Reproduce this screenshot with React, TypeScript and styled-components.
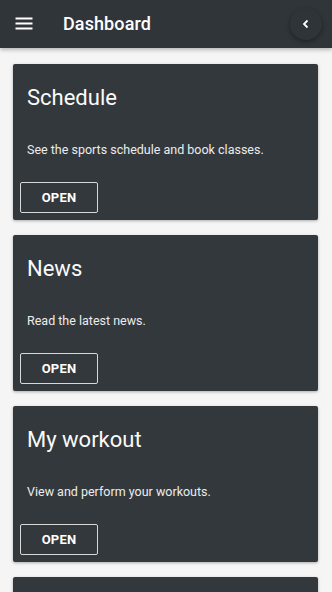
import { FC } from "react";
import styled, { createGlobalStyle } from "styled-components";

const GlobalStyle = createGlobalStyle`
  html, body {
    margin: 0;
    padding: 0;
    background: #f5f5f5;
    font-family: Roboto, "Liberation Sans", sans-serif;
  }
  * {
    box-sizing: border-box;
  }
`;

const Page = styled.div`
  width: 332px;
  height: 592px;
  overflow: hidden;
  background: #f5f5f5;
`;

const TopBar = styled.header`
  height: 48px;
  display: flex;
  align-items: center;
  padding: 0 10px 0 12px;
  background: #303539;
  color: #ffffff;
  box-shadow: 0 2px 4px rgba(0, 0, 0, 0.25);
  position: relative;
  z-index: 1;
`;

const MenuButton = styled.button`
  width: 24px;
  height: 24px;
  padding: 0;
  border: none;
  background: none;
  color: #ffffff;
  display: flex;
  align-items: center;
  justify-content: center;
`;

const Title = styled.h1`
  margin: 0 0 0 27px;
  flex: 1;
  font-size: 18px;
  font-weight: 500;
  line-height: 24px;
  letter-spacing: 0.1px;
`;

const BackButton = styled.button`
  width: 32px;
  height: 32px;
  border-radius: 50%;
  border: none;
  padding: 0;
  background: #2f3438;
  color: #ffffff;
  box-shadow: 0 2px 5px rgba(0, 0, 0, 0.35);
  display: flex;
  align-items: center;
  justify-content: center;
`;

const CardList = styled.main`
  display: flex;
  flex-direction: column;
  gap: 15px;
  padding: 16px 14px 16px 13px;
`;

const Card = styled.section<{ $peek?: boolean }>`
  background: #33383c;
  border-radius: 2px;
  box-shadow: 0 1px 3px rgba(0, 0, 0, 0.3);
  padding: 20px 14px 7px 7px;
  min-height: ${({ $peek }) => ($peek ? "156px" : "auto")};
  display: flex;
  flex-direction: column;
  align-items: flex-start;
  color: #ffffff;
`;

const CardTitle = styled.h2`
  margin: 0 0 0 7px;
  font-size: 22px;
  font-weight: 400;
  line-height: 28px;
  color: #fafafa;
`;

const CardText = styled.p`
  margin: 28px 0 0 7px;
  font-size: 12.5px;
  line-height: 20px;
  color: #ececec;
`;

const OpenButton = styled.button`
  margin-top: 22px;
  width: 78px;
  height: 31px;
  border: 1px solid #d8d8d8;
  border-radius: 2px;
  background: transparent;
  color: #ffffff;
  font-family: Roboto, "Liberation Sans", sans-serif;
  font-size: 13px;
  font-weight: 700;
  letter-spacing: 0.2px;
`;

const cards = [
  { title: "Schedule", text: "See the sports schedule and book classes." },
  { title: "News", text: "Read the latest news." },
  { title: "My workout", text: "View and perform your workouts." },
];

const App: FC = () => {
  return (
    <Page>
      <GlobalStyle />
      <TopBar>
        <MenuButton aria-label="menu">
          <svg width="24" height="24" viewBox="0 0 24 24">
            <path
              d="M3.5 6.5h17M3.5 11.5h17M3.5 16.5h17"
              stroke="currentColor"
              strokeWidth="2"
              fill="none"
            />
          </svg>
        </MenuButton>
        <Title>Dashboard</Title>
        <BackButton aria-label="back">
          <svg width="12" height="12" viewBox="0 0 12 12">
            <path
              d="M7.5 2.5L4 6l3.5 3.5"
              stroke="currentColor"
              strokeWidth="1.8"
              fill="none"
            />
          </svg>
        </BackButton>
      </TopBar>
      <CardList>
        {cards.map((card) => (
          <Card key={card.title}>
            <CardTitle>{card.title}</CardTitle>
            <CardText>{card.text}</CardText>
            <OpenButton>OPEN</OpenButton>
          </Card>
        ))}
        {/* next card only peeks in at the bottom edge */}
        <Card $peek />
      </CardList>
    </Page>
  );
};

export default App;
